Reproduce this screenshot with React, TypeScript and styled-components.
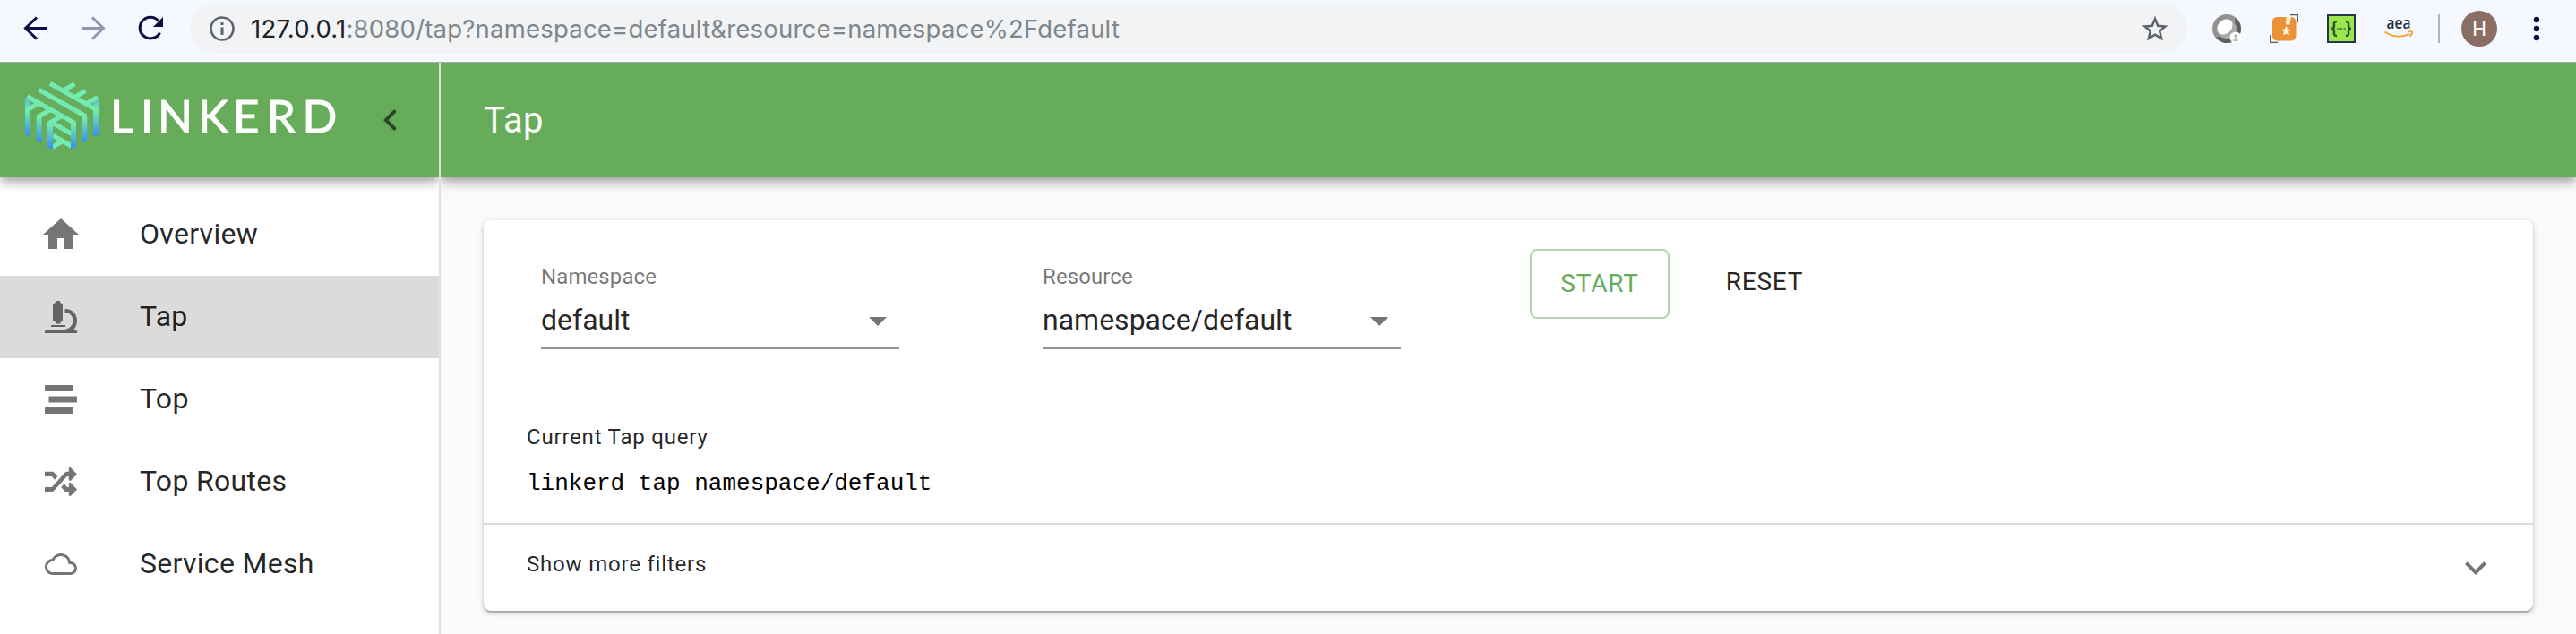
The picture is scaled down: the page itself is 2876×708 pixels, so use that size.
import React from 'react';
import styled, { createGlobalStyle } from 'styled-components';

const Global = createGlobalStyle`
  * { box-sizing: border-box; }
  body { margin: 0; background: #fafafa; font-family: Roboto, "Liberation Sans", sans-serif; color: rgba(0,0,0,.87); }
`;

const Page = styled.div`
  height: 708px;
  display: flex;
  flex-direction: column;
  overflow: hidden;
`;
const BrowserBar = styled.div`
  height: 70px;
  flex: none;
  display: flex;
  align-items: flex-start;
  background: #f5f8fe;
  border-bottom: 1px solid #a3a9ac;
`;
const BrowserButtons = styled.svg`
  display: block;
  flex: none;
  width: 212px;
  height: 64px;
`;
const AddressBar = styled.div`
  width: 2230px;
  height: 56px;
  margin-top: 4px;
  display: flex;
  align-items: center;
  border-radius: 28px;
  background: #f1f3f4;
`;
const InfoIcon = styled.svg`
  width: 28px;
  height: 28px;
  margin-left: 22px;
`;
const Url = styled.span`
  flex: 1;
  margin-left: 18px;
  font-family: Inter, sans-serif;
  font-size: 27.5px;
  line-height: 56px;
  letter-spacing: 0.21px;
  color: #80868b;
  white-space: nowrap;
`;
const Host = styled.span`
  color: #202124;
`;
const StarIcon = styled.svg`
  width: 30px;
  height: 30px;
  margin-right: 21px;
`;
const Extensions = styled.div`
  display: flex;
  align-items: center;
  height: 64px;
  margin-left: 28px;
`;
const ExtIcon = styled.svg`
  width: 32px;
  height: 32px;
  margin-right: 32px;
  overflow: visible;
`;
const BarDivider = styled.span`
  width: 2px;
  height: 32px;
  margin-left: -4px;
  background: #b3b1cb;
`;
const Avatar = styled.span`
  width: 40px;
  height: 40px;
  margin-left: 24px;
  border-radius: 50%;
  background: #8a6e63;
  color: #fff;
  font-size: 22px;
  line-height: 41px;
  text-align: center;
`;
const MenuDots = styled.svg`
  width: 8px;
  height: 28px;
  margin-left: 40px;
`;

const AppBody = styled.div`
  flex: 1;
  display: flex;
  min-height: 0;
`;
const Drawer = styled.aside`
  width: 492px;
  flex: none;
  background: #fff;
  border-right: 2px solid #e0e0e0;
`;
const appBarShadow = `0 4px 8px -2px rgba(0,0,0,.2), 0 8px 10px 0 rgba(0,0,0,.14), 0 2px 20px 0 rgba(0,0,0,.12)`;
const DrawerHeader = styled.div`
  height: 128px;
  display: flex;
  align-items: center;
  background: #67ac5b;
  box-shadow: ${appBarShadow};
  clip-path: inset(0 0 -40px 0);
`;
const Logo = styled.svg`
  width: 400px;
  height: 128px;
`;
const CollapseIcon = styled.svg`
  width: 48px;
  height: 48px;
  margin-left: 12px;
  fill: rgba(0,0,0,.6);
`;
const NavList = styled.nav`
  padding-top: 18px;
`;
const NavItem = styled.a<{ $active?: boolean }>`
  height: 92px;
  display: flex;
  align-items: center;
  padding-left: 44px;
  background: ${p => (p.$active ? '#dbdbdb' : 'transparent')};
  font-size: 32px;
  line-height: 48px;
  letter-spacing: 0.3px;
`;
const NavIcon = styled.svg<{ $size: number }>`
  width: ${p => p.$size}px;
  height: ${p => p.$size}px;
  margin: 0 ${p => 64 + (48 - p.$size) / 2}px 0 ${p => (48 - p.$size) / 2}px;
  fill: rgba(0,0,0,.54);
`;
const NavLabel = styled.span`
  padding-bottom: 3px;
`;

const Main = styled.main`
  flex: 1;
  display: flex;
  flex-direction: column;
`;
const AppBar = styled.header`
  height: 128px;
  padding-left: 48px;
  background: #67ac5b;
  box-shadow: ${appBarShadow};
  clip-path: inset(0 0 -40px 0);
  color: #fff;
  font-size: 40px;
  line-height: 130px;
  letter-spacing: 0.3px;
`;
const Card = styled.section`
  height: 436px;
  margin: 48px 48px 0;
  border-radius: 8px;
  background: #fff;
  box-shadow: 0 2px 6px 0 rgba(0,0,0,.2), 0 2px 2px 0 rgba(0,0,0,.14), 0 4px 2px -2px rgba(0,0,0,.12);
`;
const Filters = styled.div`
  height: 208px;
  display: flex;
  padding-left: 64px;
`;
const Field = styled.label`
  width: 400px;
  height: 144px;
  margin-right: 160px;
  padding-top: 48px;
  border-bottom: 2px solid #949494;
`;
const FieldLabel = styled.span`
  display: block;
  font-size: 24px;
  line-height: 30px;
  letter-spacing: 0.1px;
  color: rgba(0,0,0,.54);
`;
const FieldValue = styled.span`
  height: 48px;
  margin-top: 10px;
  display: flex;
  justify-content: space-between;
  font-size: 32px;
  line-height: 46px;
`;
const Arrow = styled.svg`
  width: 48px;
  height: 48px;
  fill: rgba(0,0,0,.54);
`;
const StartButton = styled.button`
  width: 156px;
  height: 78px;
  margin: 32px 0 0 -16px;
  padding: 0;
  border: 2px solid #b4d7af;
  border-radius: 8px;
  background: transparent;
  color: #67ac5b;
  font: 28px/74px Roboto, sans-serif;
  letter-spacing: 0.8px;
`;
const ResetButton = styled(StartButton)`
  border-color: transparent;
  color: rgba(0,0,0,.87);
  height: 74px;
  line-height: 70px;
  margin-left: 28px;
`;
const Query = styled.div`
  height: 130px;
  padding: 18px 48px 0;
`;
const Caption = styled.div`
  font-size: 24px;
  line-height: 32px;
  letter-spacing: 0.8px;
`;
const Code = styled.code`
  display: block;
  margin-top: 20px;
  font: 26px/32px "Liberation Mono", monospace;
  color: #000;
`;
const Expander = styled.div`
  height: 98px;
  display: flex;
  align-items: flex-start;
  justify-content: space-between;
  padding: 24px 40px 0 48px;
  border-top: 2px solid #dbdbdb;
`;
const ExpanderLabel = styled(Caption)`
  margin-top: 4px;
`;

const navItems = [
  { label: 'Overview', size: 48, box: '0 0 24 24', d: 'M10 20v-6h4v6h5v-8h3L12 3 2 12h3v8z' },
  { label: 'Tap', size: 36, box: '0 0 36 36', active: true, d: 'M12 0h5v1.500l3 2.500v18l-2.500 2v1.500h-5V24L9 22V4l3-2.500z M22.500 9C31 9 36 15 36 22c0 4-1.200 7-3.600 10H35l1 2v2H0v-2l1-2h21c6-1 9.500-5 9.500-10s-3.500-9-9-9z M7 27h16v2H7z' },
  { label: 'Top', size: 36, box: '0 0 36 36', d: 'M.8 2h30.400a.8.8 0 0 1 .8.800v5.400a.8.8 0 0 1-.8.800H.800a.8.8 0 0 1-.8-.8V2.800A.8.8 0 0 1 .8 2z M5.300 14.500h29.900a.8.8 0 0 1 .8.800v5.400a.8.8 0 0 1-.8.800H5.300a.8.8 0 0 1-.8-.8v-5.400a.8.8 0 0 1 .8-.8z M.8 27h30.400a.8.8 0 0 1 .8.800v5.400a.8.8 0 0 1-.8.800H.800a.8.8 0 0 1-.8-.8v-5.400A.8.8 0 0 1 .8 27z' },
  { label: 'Top Routes', size: 36, box: '0 0 36 36', d: 'M0 6.700h9.500L14.300 12l-3.300 3.700L7.800 12H0zM0 24h7.800L22.500 7.800 24 6.700h2.800V3q.8-2 2.200-.8L36 9.500 29 16.800q-1.400 1-2.200-.8V12h-2L10 28.200 8.800 29H0zM21.700 20.300L25 24h1.800v-4q.8-2 2.200-.8l7 7.300-7 7.300q-1.400 1-2.200-.8v-4h-4l-4.700-5z' },
  { label: 'Service Mesh', size: 36, box: '0 0 24 24', d: 'M19.350 10.040C18.670 6.590 15.640 4 12 4 9.110 4 6.600 5.640 5.350 8.040 2.340 8.360 0 10.910 0 14c0 3.310 2.690 6 6 6h13c2.760 0 5-2.240 5-5 0-2.640-2.050-4.780-4.650-4.960zM19 18H6c-2.210 0-4-1.790-4-4 0-2.050 1.530-3.760 3.560-3.970l1.070-.11.500-.95C8.080 7.140 9.940 6 12 6c2.620 0 4.880 1.860 5.390 4.430l.3 1.500 1.530.11c1.560.1 2.780 1.410 2.780 2.960 0 1.650-1.350 3-3 3z' },
];

const LogoMark = () => (
  <>
    <defs>
      <linearGradient id="leg" x1="0" y1="0" x2="0" y2="1">
        <stop offset="0.100" stopColor="#70ebb0" />
        <stop offset="1" stopColor="#3588fa" />
      </linearGradient>
      <linearGradient id="shade" x1="0" y1="0" x2="0" y2="1">
        <stop offset="0" stopColor="#4fb5d8" />
        <stop offset="1" stopColor="#70ebb0" />
      </linearGradient>
    </defs>
    <path fill="url(#shade)" d="M28 38.500l6 2V49l-6 4zM110 38.500l-6 2V49l6 4z" />
    <g fill="none" stroke="#71ebb0" strokeWidth="5.200">
      <path d="M56 23.300L108.500 53M43.500 30.300L96 60M30.500 37.800L83.500 67.500" />
      <path d="M70 31.500l13.300-7.700M83 38.700l12.500-7.200M95.500 46.300l13.500-7.800" />
      <path d="M29.500 53.300l15-8.700M42 60.700l14-8M54.500 67.700l14.500-8.300" />
      <path d="M59 67.500l21 12M59 81.300l21 12M58.500 94.300l12-7" />
    </g>
    <g fill="url(#leg)">
      <path d="M28 52l6 1v29.300l-6-2z" />
      <path d="M40.700 59l5.800 1v29.500l-5.800-2.500z" />
      <path d="M53 66l6 1.500V97l-6-3.500z" />
      <path d="M110 52l-6 1v29.300l6-2z" />
      <path d="M97.300 59l-5.800 1v29.500l5.800-2.500z" />
      <path d="M85 66l-6 1.500V97l6-3.500z" />
    </g>
  </>
);

export default function App() {
  return (
    <Page>
      <Global />
      <BrowserBar>
        <BrowserButtons viewBox="0 0 212 64" fill="none" stroke="#100b45" strokeWidth="3">
          <path d="M53 31.500H29M41 19.500l-12.500 12 12.500 12" />
          <path stroke="#9592b4" d="M91 31.500h24M103 19.500l12.500 12-12.500 12" />
          <path d="M178.500 36.500a11.800 11.800 0 1 1-1.500-13" />
          <path fill="#100b45" stroke="none" d="M182 19v11h-11z" />
        </BrowserButtons>
        <AddressBar>
          <InfoIcon viewBox="0 0 28 28">
            <circle cx="14" cy="14" r="12.500" fill="none" stroke="#5f6368" strokeWidth="2.600" />
            <path fill="#5f6368" d="M12.500 7h3v3h-3zM12.500 12.500h3V21h-3z" />
          </InfoIcon>
          <Url><Host>127.0.0.1</Host>:8080/tap?namespace=default&amp;resource=namespace%2Fdefault</Url>
          <StarIcon viewBox="0 0 30 30" fill="none" stroke="#5f6368" strokeWidth="2.500">
            <path d="M15 4l3.200 7.700 8.200.7-6.200 5.400 1.900 8.100L15 21.600l-7.100 4.300 1.900-8.100-6.200-5.400 8.200-.7z" />
          </StarIcon>
        </AddressBar>
        <Extensions>
          <ExtIcon viewBox="0 0 32 32">
            <circle cx="16" cy="16" r="16" fill="#929292" />
            <path fill="#5e5e5e" d="M26 4a16 16 0 0 1 4 20l-7-3zM4 26a16 16 0 0 0 18 5l-3-8z" />
            <circle cx="16" cy="16" r="11" fill="#aaa" />
            <ellipse cx="14" cy="14" rx="9.500" ry="7.500" transform="rotate(-45 14 14)" fill="#fff" />
            <circle cx="26" cy="26" r="6.500" fill="#fff" />
            <path stroke="#888" fill="none" d="M26 23v4M24.500 24.500L26 23l1.500 1.500M23 29h6" />
          </ExtIcon>
          <ExtIcon viewBox="0 0 32 32">
            <path d="M23 .7h8.300V9M.7 23v8.300H9" fill="none" stroke="#55585c" strokeWidth="1.300" />
            <rect x="3" y="3" width="26.500" height="26.500" rx="5.500" fill="#eb9238" />
            <path fill="#fdf0cf" d="M18.500 3h5.500l-1.500 8.500h-4.500zM18.500 13l1.600 3.600 3.900.4-2.900 2.600.9 3.900-3.500-2-3.400 2 .8-3.900-2.900-2.600 3.900-.4z" />
          </ExtIcon>
          <ExtIcon viewBox="0 0 32 32">
            <rect x="1" y="1" width="30" height="30" fill="#9be64e" stroke="#25374a" strokeWidth="2" />
            <path d="M11 8c-4 0-3 3-3 5s-1 3-3 3c2 0 3 1 3 3s-1 5 3 5M21 8c4 0 3 3 3 5s1 3 3 3c-2 0-3 1-3 3s1 5-3 5" fill="none" stroke="#31522c" strokeWidth="2.500" />
            <path d="M11.500 16h2M15 16h2M18.500 16h2" stroke="#557f38" strokeWidth="2" />
          </ExtIcon>
          <ExtIcon viewBox="0 0 32 32">
            <text x="16" y="16" textAnchor="middle" fontFamily="Open Sans" fontSize="18" fontWeight="600" textLength="27" lengthAdjust="spacingAndGlyphs" fill="#232f3e">aea</text>
            <path d="M.5 19.500c9 6.500 20 6.500 28 2M26 19.500c4-1 6-.5 5 1.500l-2 4" fill="none" stroke="#f5a22d" strokeWidth="1.700" />
          </ExtIcon>
          <BarDivider />
          <Avatar>H</Avatar>
          <MenuDots viewBox="0 0 8 28" fill="#100b45">
            <circle cx="4" cy="4" r="3.200" /><circle cx="4" cy="14" r="3.200" /><circle cx="4" cy="24" r="3.200" />
          </MenuDots>
        </Extensions>
      </BrowserBar>
      <AppBody>
        <Drawer>
          <DrawerHeader>
            <Logo viewBox="0 0 400 128">
              <LogoMark />
              <text x="123 157 176 221 260 298 337.500" y="78.300" fontFamily="Lato" fontSize="51" fill="#fff" stroke="#fff" strokeWidth="1" strokeLinejoin="round">LINKERD</text>
            </Logo>
            <CollapseIcon viewBox="0 0 24 24"><path d="M15.410 7.410L14 6l-6 6 6 6 1.410-1.410L10.830 12z" /></CollapseIcon>
          </DrawerHeader>
          <NavList>
            {navItems.map(item => (
              <NavItem key={item.label} $active={item.active}>
                <NavIcon viewBox={item.box} $size={item.size}><path d={item.d} /></NavIcon>
                <NavLabel>{item.label}</NavLabel>
              </NavItem>
            ))}
          </NavList>
        </Drawer>
        <Main>
          <AppBar>Tap</AppBar>
          <Card>
            <Filters>
              <Field>
                <FieldLabel>Namespace</FieldLabel>
                <FieldValue>default<Arrow viewBox="0 0 24 24"><path d="M7 10l5 5 5-5z" /></Arrow></FieldValue>
              </Field>
              <Field>
                <FieldLabel>Resource</FieldLabel>
                <FieldValue>namespace/default<Arrow viewBox="0 0 24 24"><path d="M7 10l5 5 5-5z" /></Arrow></FieldValue>
              </Field>
              <StartButton>START</StartButton>
              <ResetButton>RESET</ResetButton>
            </Filters>
            <Query>
              <Caption>Current Tap query</Caption>
              <Code>linkerd tap namespace/default</Code>
            </Query>
            <Expander>
              <ExpanderLabel>Show more filters</ExpanderLabel>
              <Arrow viewBox="0 0 24 24"><path d="M16.590 8.590L12 13.170 7.410 8.590 6 10l6 6 6-6z" /></Arrow>
            </Expander>
          </Card>
        </Main>
      </AppBody>
    </Page>
  );
}
